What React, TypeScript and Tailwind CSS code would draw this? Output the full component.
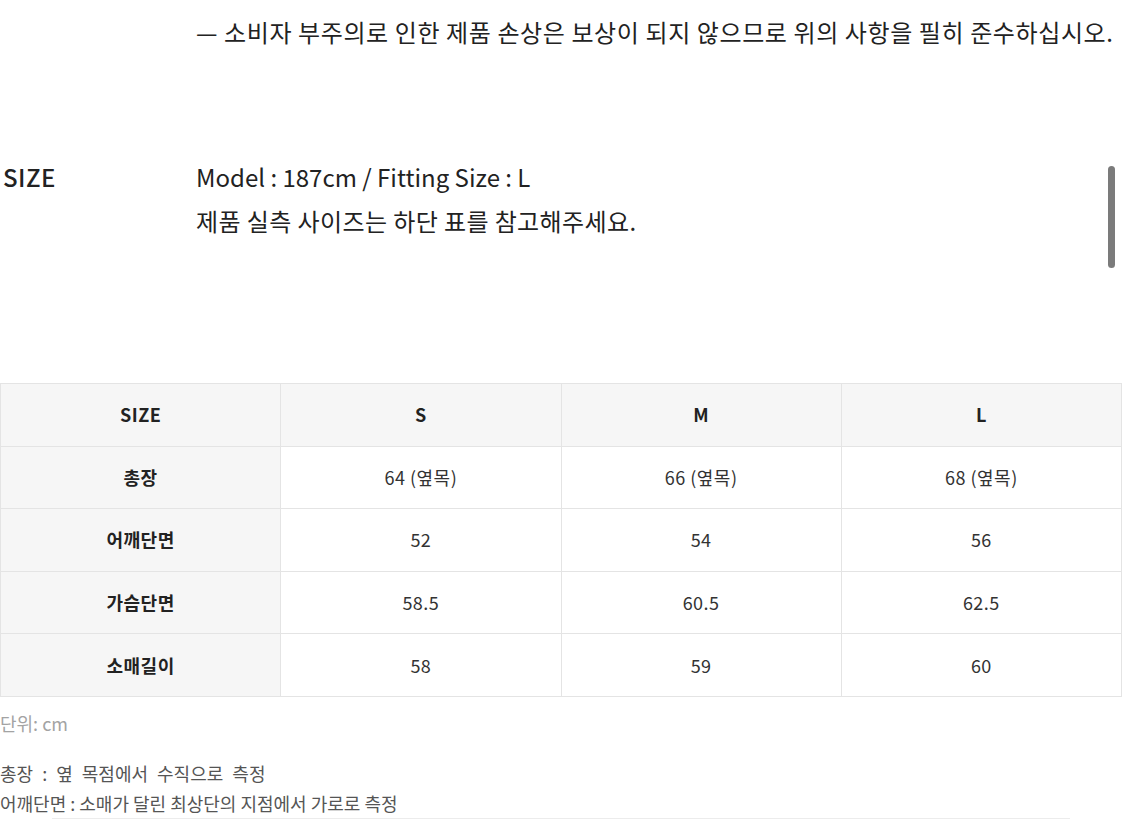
import React from "react";

const rows: [string, string, string, string][] = [
    ["총장", "64 (옆목)", "66 (옆목)", "68 (옆목)"],
    ["어깨단면", "52", "54", "56"],
    ["가슴단면", "58.5", "60.5", "62.5"],
    ["소매길이", "58", "59", "60"],
];

const SizeTable: React.FC = () => {
    return (
        <table className="w-[1122px] table-fixed border-collapse text-[18px] tracking-[0.5px]">
            <thead>
                <tr className="h-[62.6px] bg-[#f6f6f6]">
                    {["SIZE", "S", "M", "L"].map((h) => (
                        <th key={h} className="border border-[#e4e4e4] font-semibold text-[#222]">{h}</th>
                    ))}
                </tr>
            </thead>
            <tbody>
                {rows.map((r) => (
                    <tr key={r[0]} className="h-[62.6px]">
                        <td className="border border-[#e4e4e4] bg-[#f6f6f6] text-center font-bold text-[#222]">{r[0]}</td>
                        {r.slice(1).map((v, i) => (
                            <td key={i} className="border border-[#e4e4e4] text-center text-[#333]">{v}</td>
                        ))}
                    </tr>
                ))}
            </tbody>
        </table>
    );
};

const App: React.FC = () => {
    return (
        <div className="relative w-[1125px] h-[821px] overflow-hidden bg-white font-['Noto_Sans_CJK_KR','Noto_Sans',sans-serif]">
            <div className="pt-[10px] pl-[196px] text-[24px] leading-[44px] text-[#222] tracking-[0.6px]">
                — 소비자 부주의로 인한 제품 손상은 보상이 되지 않으므로 위의 사항을 필히 준수하십시오.
            </div>

            <div className="mt-[101px] flex text-[24px] leading-[44px] text-[#222]">
                <div className="w-[196px] pl-[3px] font-medium tracking-[0.5px]">SIZE</div>
                <div>
                    <p>Model : 187cm / Fitting Size : L</p>
                    <p className="tracking-[0.4px]">제품 실측 사이즈는 하단 표를 참고해주세요.</p>
                </div>
            </div>

            <div className="mt-[140px]">
                <SizeTable />
            </div>

            <p className="mt-[14px] text-[18px] leading-[24px] text-[#a3a3a3]">단위: cm</p>

            <div className="mt-[23px] text-[18px] leading-[30px] text-[#555]">
                <p className="[word-spacing:5px]">총장 : 옆 목점에서 수직으로 측정</p>
                <p>어깨단면 : 소매가 달린 최상단의 지점에서 가로로 측정</p>
            </div>
            <div className="ml-[52px] w-[1018px] border-t border-[#ececec]"></div>

            {/* scrollbar thumb */}
            <div className="absolute left-[1108px] top-[166px] w-[7px] h-[102px] rounded-full bg-[#7b7b7b]"></div>
        </div>
    );
};

export default App;
